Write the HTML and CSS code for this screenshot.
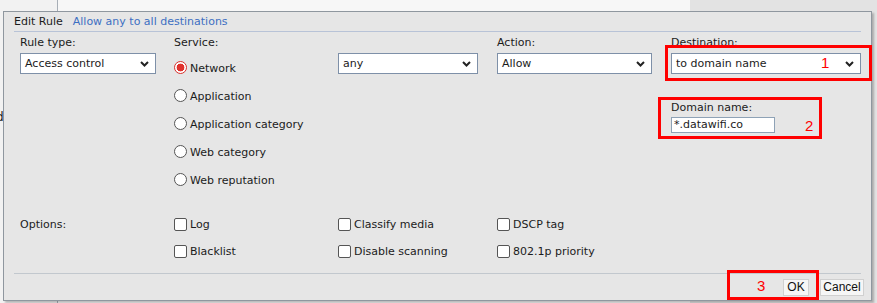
FILE: index.html
```html
<!DOCTYPE html>
<html>
<head>
<meta charset="utf-8">
<link rel="stylesheet" href="styles.css">
</head>
<body>
<div class="page">
  <div class="backdrop">
    <div class="side"><div class="side-text">d</div></div>
    <div class="main"></div>
    <div class="outer"></div>
  </div>

  <div class="dialog">
    <div class="title">
      <span class="title-text">Edit Rule</span>
      <span class="title-link">Allow any to all destinations</span>
    </div>
    <div class="title-rule"></div>

    <div class="form">
      <div class="lbl c1 r1">Rule type:</div>
      <div class="lbl c2 r1">Service:</div>
      <div class="lbl c4 r1">Action:</div>
      <div class="lbl c5 r1">Destination:</div>

      <div class="select w-rule c1 r2"><span>Access control</span><svg class="chev" width="9" height="6" viewBox="0 0 9 6"><path d="M1 1 L4.5 4.5 L8 1" fill="none" stroke="#222" stroke-width="2"/></svg></div>

      <div class="radio-item c2 r2"><span class="radio checked"></span><span>Network</span></div>
      <div class="radio-item c2 r3"><span class="radio"></span><span>Application</span></div>
      <div class="radio-item c2 r4"><span class="radio"></span><span>Application category</span></div>
      <div class="radio-item c2 r5"><span class="radio"></span><span>Web category</span></div>
      <div class="radio-item c2 r6"><span class="radio"></span><span>Web reputation</span></div>

      <div class="select w-any c3 r2"><span>any</span><svg class="chev" width="9" height="6" viewBox="0 0 9 6"><path d="M1 1 L4.5 4.5 L8 1" fill="none" stroke="#222" stroke-width="2"/></svg></div>
      <div class="select w-allow c4 r2"><span>Allow</span><svg class="chev" width="9" height="6" viewBox="0 0 9 6"><path d="M1 1 L4.5 4.5 L8 1" fill="none" stroke="#222" stroke-width="2"/></svg></div>
      <div class="select w-dest c5 r2"><span>to domain name</span><svg class="chev" width="9" height="6" viewBox="0 0 9 6"><path d="M1 1 L4.5 4.5 L8 1" fill="none" stroke="#222" stroke-width="2"/></svg></div>

      <div class="domain c5 r34">
        <div class="domain-label">Domain name:</div>
        <div class="text-input">*.datawifi.co</div>
      </div>

      <div class="lbl c1 r7">Options:</div>
      <div class="check-item c2 r7"><span class="check"></span><span>Log</span></div>
      <div class="check-item c2 r8"><span class="check"></span><span>Blacklist</span></div>
      <div class="check-item c3 r7"><span class="check"></span><span>Classify media</span></div>
      <div class="check-item c3 r8"><span class="check"></span><span>Disable scanning</span></div>
      <div class="check-item c4 r7"><span class="check"></span><span>DSCP tag</span></div>
      <div class="check-item c4 r8"><span class="check"></span><span>802.1p priority</span></div>
    </div>

    <div class="footer-rule"></div>
    <div class="footer">
      <button class="btn btn-ok">OK</button>
      <button class="btn btn-cancel">Cancel</button>
    </div>

    <div class="mark mark1"><span class="num num1">1</span></div>
    <div class="mark mark2"><span class="num num2">2</span></div>
    <div class="mark mark3"><span class="num num3">3</span></div>
  </div>
</div>
</body>
</html>
```

FILE: styles.css
```css
* { box-sizing: border-box; }
html, body { margin: 0; padding: 0; }
body {
  width: 877px;
  height: 303px;
  overflow: hidden;
  font-family: "DejaVu Sans", sans-serif;
  font-size: 11px;
  color: #1b1b1b;
  background: #e2e2e2;
}
.page { position: relative; width: 877px; height: 303px; }

.backdrop { display: flex; height: 303px; }
.side {
  width: 58px;
  background: #f2f2f2;
  border-right: 1px solid #a9b0b8;
  padding-top: 110px;
  overflow: hidden;
}
.side-text { text-indent: -4px; font-size: 12px; }
.main {
  width: 632px;
  background: #f7f7f7;
  box-shadow: 2px 0 3px rgba(0,0,0,0.15);
}
.outer { flex: 1; background: #e3e3e3; }

.dialog {
  position: absolute;
  left: 3px;
  top: 11px;
  width: 869px;
  height: 290px;
  background: #e6e6e6;
  border: 1px solid #8f979f;
  box-shadow: 2px 2px 2px rgba(0,0,0,0.25);
}

.title {
  height: 19px;
  padding-left: 10px;
  display: flex;
  align-items: center;
  gap: 10px;
  font-size: 11px;
}
.title-text { color: #1b1b1b; }
.title-link { color: #3d6fc2; }
.title-rule { height: 1px; margin: 0 10px; background: #b8c3d7; }

.form {
  display: grid;
  padding-left: 16px;
  grid-template-columns: 154px 164px 159px 174px 1fr;
  grid-template-rows: 22px 28px 28px 28px 28px 28px 17px 27px 27px;
}
.c1 { grid-column: 1; }
.c2 { grid-column: 2; }
.c3 { grid-column: 3; }
.c4 { grid-column: 4; }
.c5 { grid-column: 5; }
.r1 { grid-row: 1; }
.r2 { grid-row: 2; }
.r3 { grid-row: 3; }
.r4 { grid-row: 4; }
.r5 { grid-row: 5; }
.r6 { grid-row: 6; }
.r7 { grid-row: 8; }
.r8 { grid-row: 9; }
.r34 { grid-row: 3 / 5; }

.lbl { align-self: center; line-height: 14px; }

.select {
  height: 21px;
  background: #fff;
  border: 1px solid #7e90a8;
  display: flex;
  align-items: center;
  justify-content: space-between;
  padding: 0 6px 0 4px;
  align-self: start;
  margin-top: -1px;
}
.w-rule { width: 136px; }
.w-any { width: 140px; }
.w-allow { width: 155px; }
.w-dest { width: 190px; }
.chev { display: block; }

.radio-item, .check-item {
  display: flex;
  align-items: center;
  gap: 3px;
}
.radio {
  width: 13px;
  height: 13px;
  border-radius: 50%;
  border: 1px solid #555;
  background: #fff;
  margin-top: -2px;
}
.radio.checked {
  border: 1px solid #d9302c;
  background: radial-gradient(circle, #e0322e 0 3.6px, #fff 4.2px);
}
.check {
  width: 13px;
  height: 13px;
  border: 1px solid #555;
  border-radius: 2px;
  background: #fff;
}

.domain {
  display: flex;
  flex-direction: column;
  gap: 2px;
  padding-top: 19px;
}
.domain-label { line-height: 14px; }
.text-input {
  width: 104px;
  height: 16px;
  background: #fff;
  border: 1px solid #8ea2b6;
  padding-left: 2px;
  line-height: 14px;
}

.footer-rule { height: 1px; margin: 8px 10px 0; background: #c2c8ce; }
.footer {
  display: flex;
  justify-content: flex-end;
  gap: 11px;
  padding: 5px 7px 0 0;
}
.btn {
  font-family: "Liberation Sans", Arial, sans-serif;
  font-size: 12px;
  color: #111;
  height: 17px;
  padding: 0;
  background: #f6f6f6;
  border: 1px solid #d0d0d0;
  border-radius: 0;
  line-height: 15px;
}
.btn-ok { width: 26px; }
.btn-cancel { width: 44px; }

.mark {
  position: absolute;
  border: 3px solid #ff0000;
  font-family: "Liberation Sans", Arial, sans-serif;
}
.mark1 { left: 661px; top: 33px; width: 207px; height: 36px; }
.mark2 { left: 654px; top: 85px; width: 164px; height: 42px; }
.mark3 { left: 723px; top: 258px; width: 92px; height: 30px; }
.num {
  position: absolute;
  color: #ff0000;
  font-size: 15px;
  line-height: 15px;
}
.num1 { left: 153px; top: 7px; }
.num2 { left: 144px; top: 18px; }
.num3 { left: 27px; top: 5px; }
```
